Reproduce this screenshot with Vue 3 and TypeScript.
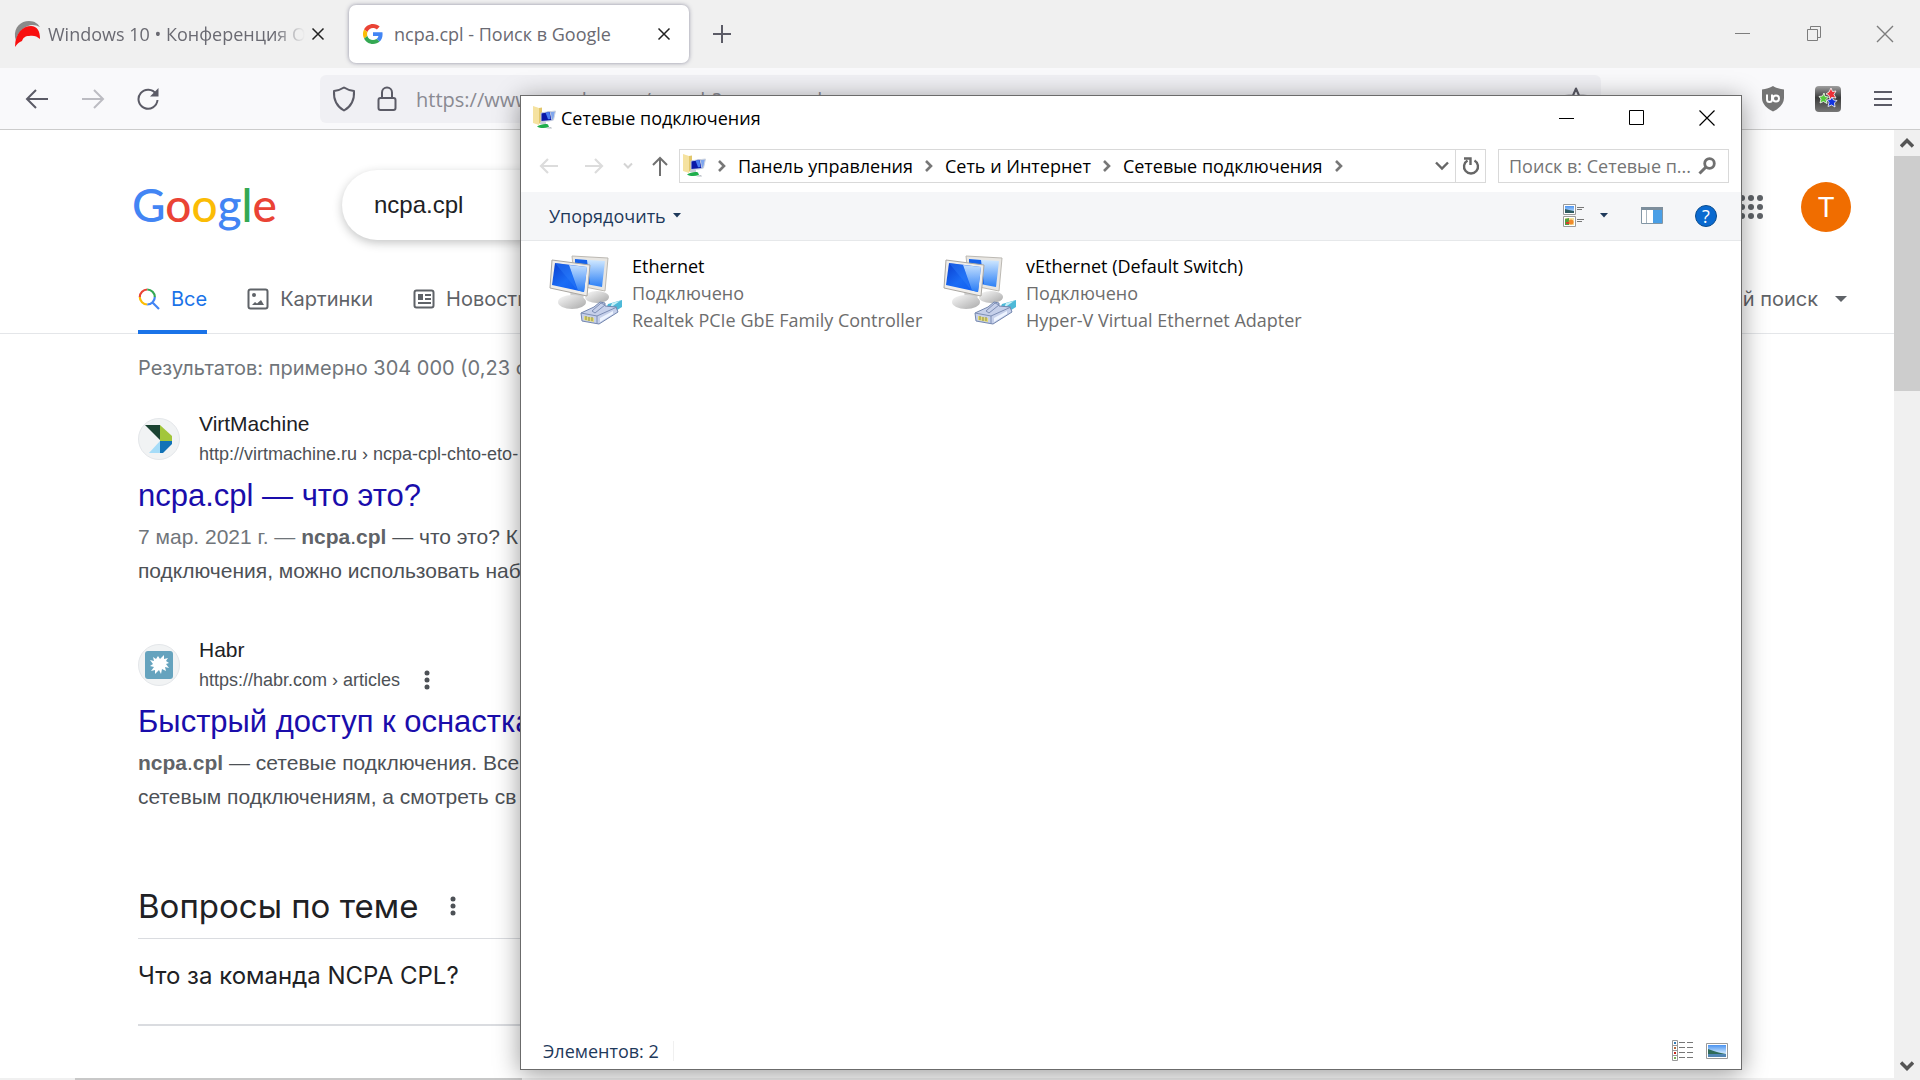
<script setup lang="ts">
import { ref } from 'vue'

interface Adapter {
  name: string
  status: string
  device: string
}

const adapters: Adapter[] = [
  { name: 'Ethernet', status: 'Подключено', device: 'Realtek PCIe GbE Family Controller' },
  { name: 'vEthernet (Default Switch)', status: 'Подключено', device: 'Hyper-V Virtual Ethernet Adapter' },
]

const crumbs: string[] = ['Панель управления', 'Сеть и Интернет', 'Сетевые подключения']

const address = ref('https://www.google.com/search?q=ncpa.cpl')
const query = ref('ncpa.cpl')
</script>

<template>
  <div class="screen">
    <svg class="defs" aria-hidden="true">
      <defs>
        <linearGradient id="glass" x1="0" y1="0" x2="1" y2="1">
          <stop offset="0" stop-color="#0a3fd0" />
          <stop offset="0.5" stop-color="#1a6cf5" />
          <stop offset="1" stop-color="#0b58ee" />
        </linearGradient>
        <linearGradient id="shine" x1="0" y1="0" x2="0" y2="1">
          <stop offset="0" stop-color="#d5ebff" />
          <stop offset="1" stop-color="#2c80f6" />
        </linearGradient>
        <linearGradient id="stand" x1="0" y1="0" x2="1" y2="1">
          <stop offset="0" stop-color="#fafafa" />
          <stop offset="1" stop-color="#a9a9a9" />
        </linearGradient>
        <linearGradient id="sky" x1="0" y1="0" x2="0" y2="1">
          <stop offset="0" stop-color="#4b93f0" />
          <stop offset="1" stop-color="#d9efff" />
        </linearGradient>
        <linearGradient id="plate" x1="0" y1="0" x2="0" y2="1">
          <stop offset="0" stop-color="#a0a0a0" />
          <stop offset="0.45" stop-color="#3a3a3a" />
          <stop offset="1" stop-color="#777" />
        </linearGradient>
        <symbol id="folder-net" viewBox="0 0 24 24">
          <path d="M1 0l6 2v17l-6-2z" fill="#f5e2a0" />
          <path d="M7 2l3-.5v14L7 18z" fill="#e2c76c" />
          <path d="M15 6l8.500-1-2 9-6 1z" fill="#7fa6ee" stroke="#cfd4de" />
          <path d="M9 7l9-1.500L20 14.500l-11 1z" fill="#0a18a8" stroke="#c3cbe0" />
          <path d="M13.500 6.500l4-.6 1 7-2.500.3z" fill="#4a7cf0" />
          <path d="M8 16h6v2H8z" fill="#c9ced6" />
          <path d="M5 20.500c3-2 8-3 11-2l1 2.500c-4 1.500-9 1.400-12-.5z" fill="#1fae4c" />
          <path d="M14 22l5-1 1 1.500h-4z" fill="#b8bdc4" />
        </symbol>
      </defs>
    </svg>

    <header class="tabstrip">
      <div class="tab">
        <svg width="28" height="26" viewBox="0 0 28 26" aria-hidden="true">
          <path d="M1 16C0 6 7 0 15 0c6 0 9 3 11 6-4-2-8-3-12-1C8 7 3 13 2 20z" fill="#8a8a8a" />
          <path d="M1 26C1 12 9 5 17 5c6 0 9 5 9 13-3-3-7-4-11-3-4 0-6 2-7 5-3 1-5 3-7 6z" fill="#f80f0f" />
        </svg>
        <span class="tab-title fading">Windows 10 • Конференция Overclockers</span>
        <button class="plain" aria-label="Закрыть вкладку">
          <svg width="14" height="14" viewBox="0 0 14 14"><path d="M1.500 1.500l11 11m0-11l-11 11" stroke="#222" stroke-width="1.500" /></svg>
        </button>
      </div>
      <div class="tab active">
        <svg width="20" height="20" viewBox="0 0 48 48" aria-hidden="true">
          <path fill="#EA4335" d="M24 9.500c3.540 0 6.710 1.220 9.210 3.600l6.850-6.850C35.900 2.380 30.470 0 24 0 14.620 0 6.510 5.380 2.560 13.220l7.980 6.190C12.430 13.720 17.740 9.500 24 9.500z" />
          <path fill="#4285F4" d="M46.980 24.550c0-1.570-.15-3.090-.38-4.550H24v9.020h12.940c-.58 2.960-2.260 5.480-4.780 7.180l7.730 6c4.510-4.180 7.090-10.360 7.090-17.650z" />
          <path fill="#FBBC05" d="M10.530 28.590A14.500 14.500 0 0 1 10.530 19.410l-7.980-6.190a24 24 0 0 0 0 21.560z" />
          <path fill="#34A853" d="M24 48c6.480 0 11.930-2.130 15.890-5.810l-7.730-6c-2.150 1.450-4.920 2.300-8.160 2.300-6.260 0-11.570-4.220-13.470-9.910l-7.980 6.190C6.510 42.620 14.620 48 24 48z" />
        </svg>
        <span class="tab-title">ncpa.cpl - Поиск в Google</span>
        <button class="plain" aria-label="Закрыть вкладку">
          <svg width="14" height="14" viewBox="0 0 14 14"><path d="M1.500 1.500l11 11m0-11l-11 11" stroke="#222" stroke-width="1.500" /></svg>
        </button>
      </div>
      <button class="plain new-tab" aria-label="Новая вкладка">
        <svg width="20" height="20" viewBox="0 0 20 20"><path d="M10 1v18M1 10h18" stroke="#5b5b66" stroke-width="2" /></svg>
      </button>
      <div class="captions">
        <button class="plain" aria-label="Свернуть">
          <svg width="18" height="18" viewBox="0 0 18 18"><path d="M1 8.500h15" stroke="#7d7d7d" /></svg>
        </button>
        <button class="plain" aria-label="Восстановить">
          <svg width="18" height="18" viewBox="0 0 18 18"><path d="M2.500 4.500h10v11h-10zM5.500 4V1.500h10v11H13" fill="none" stroke="#7d7d7d" /></svg>
        </button>
        <button class="plain" aria-label="Закрыть">
          <svg width="18" height="18" viewBox="0 0 18 18"><path d="M1 1l16 16m0-16L1 17" stroke="#7d7d7d" stroke-width="1.400" /></svg>
        </button>
      </div>
    </header>

    <div class="navbar">
      <div class="nav-buttons">
        <button class="plain" aria-label="Назад">
          <svg width="24" height="24" viewBox="0 0 24 24"><path d="M23 12H2m9-9l-9 9 9 9" fill="none" stroke="#5b5b66" stroke-width="2" /></svg>
        </button>
        <button class="plain" aria-label="Вперёд" disabled>
          <svg width="24" height="24" viewBox="0 0 24 24"><path d="M1 12h21m-9-9l9 9-9 9" fill="none" stroke="#bcbcc2" stroke-width="2" /></svg>
        </button>
        <button class="plain" aria-label="Обновить">
          <svg width="24" height="24" viewBox="0 0 24 24"><path d="M19 7a9.500 9.500 0 1 0 1.500 6" fill="none" stroke="#5b5b66" stroke-width="2" /><path d="M21.500 1v8.500H13z" fill="#5b5b66" /></svg>
        </button>
      </div>
      <div class="urlbar">
        <svg width="24" height="26" viewBox="0 0 24 26" aria-hidden="true"><path d="M12 1.500c3 2 6 3 10 3.500.5 8-2 15-10 19.500C4 20 1.500 13 2 5c4-.5 7-1.500 10-3.500z" fill="none" stroke="#5b5b66" stroke-width="2" stroke-linejoin="round" /></svg>
        <svg width="20" height="26" viewBox="0 0 20 26" aria-hidden="true"><rect x="1.500" y="12" width="17" height="12" rx="2" fill="none" stroke="#5b5b66" stroke-width="2" /><path d="M5 12V6.500a5 5 0 0 1 10 0V12" fill="none" stroke="#5b5b66" stroke-width="2" /></svg>
        <input v-model="address" class="url" type="text" aria-label="Адрес" />
        <button class="plain" aria-label="Добавить в закладки">
          <svg width="24" height="24" viewBox="0 0 24 24"><path d="M12 1.500l3 7 8 .6-6 5 2 8-7-4.400-7 4.400 2-8-6-5 8-.6z" fill="none" stroke="#5b5b66" stroke-width="2" stroke-linejoin="round" /></svg>
        </button>
      </div>
      <div class="extensions">
        <button class="plain" aria-label="uBlock Origin">
          <svg width="26" height="26" viewBox="0 0 26 26"><path d="M13 0c3 2 7 3 11 3.500V12c0 6-5 10.500-11 13.500C7 22.500 2 18 2 12V3.500C6 3 10 2 13 0z" fill="#757575" /><path d="M7 8.500v5a2.500 2.500 0 0 0 5 0v-5m0 5" fill="none" stroke="#fff" stroke-width="2" /><circle cx="16" cy="12.500" r="3" fill="none" stroke="#fff" stroke-width="2" /></svg>
        </button>
        <button class="plain" aria-label="Расширение">
          <svg width="26" height="26" viewBox="0 0 26 26"><rect width="26" height="26" rx="4" fill="url(#plate)" /><g stroke="#fff" stroke-width="0.800"><path d="M16 2l1.500 3.500 3.500-.5-2 3.500 2 3.500-4-.5-2 2-1-4-3-1.500 3-2z" fill="#ee3038" /><path d="M9 7l1 3.500 3.500.5-2.500 2.500 1 4-3.500-2-3.500 1.500 1-4-2-2.500 3.500-.5z" fill="#55c83a" /><path d="M17 11l1.500 3 3.500.5-2.500 2.500.5 4-3.500-2-3.500 1.500 1-4-2-2.500 3.500-.5z" fill="#1133e0" /></g></svg>
        </button>
        <button class="plain" aria-label="Меню">
          <svg width="26" height="26" viewBox="0 0 26 26"><path d="M4 6h18M4 13h18M4 19h18" stroke="#5b5b66" stroke-width="2" /></svg>
        </button>
      </div>
    </div>

    <div class="viewport">
      <main class="page">
        <div class="searchrow">
          <a class="logo" href="#" aria-label="Google"><span class="blue">G</span><span class="red">o</span><span class="yellow">o</span><span class="blue">g</span><span class="green">l</span><span class="red">e</span></a>
          <input v-model="query" class="query" type="text" aria-label="Поиск" />
          <div class="account">
            <button class="plain" aria-label="Приложения">
              <svg width="26" height="26" viewBox="0 0 26 26" fill="#5f6368"><circle cx="4" cy="4" r="3" /><circle cx="13" cy="4" r="3" /><circle cx="22" cy="4" r="3" /><circle cx="4" cy="13" r="3" /><circle cx="13" cy="13" r="3" /><circle cx="22" cy="13" r="3" /><circle cx="4" cy="22" r="3" /><circle cx="13" cy="22" r="3" /><circle cx="22" cy="22" r="3" /></svg>
            </button>
            <button class="plain avatar">T</button>
          </div>
        </div>

        <nav class="modes">
          <a class="mode current" href="#">
            <svg width="22" height="22" viewBox="0 0 22 22" fill="none" stroke-width="2.200" aria-hidden="true"><path d="M1.800 9a7.500 7.500 0 0 1 7.500-7.500" stroke="#ea4335" /><path d="M9.300 1.500a7.500 7.500 0 0 1 7.500 7.500" stroke="#34a853" /><path d="M1.800 9a7.500 7.500 0 0 0 7.500 7.500" stroke="#fbbc04" /><path d="M9.300 16.500a7.500 7.500 0 0 0 7.500-7.500M14.500 14.500l6.500 6.500" stroke="#4285f4" /></svg>
            Все
          </a>
          <a class="mode" href="#">
            <svg width="22" height="22" viewBox="0 0 22 22" aria-hidden="true"><rect x="1.500" y="1.500" width="19" height="19" rx="2" fill="none" stroke="#5f6368" stroke-width="2" /><circle cx="7" cy="7" r="2" fill="#5f6368" /><path d="M5 17l3-3 2 1.500 4-3.500 3 5z" fill="#5f6368" /></svg>
            Картинки
          </a>
          <a class="mode" href="#">
            <svg width="22" height="22" viewBox="0 0 22 22" aria-hidden="true"><rect x="1.500" y="2.500" width="19" height="17" rx="2" fill="none" stroke="#5f6368" stroke-width="2" /><path d="M5 6h5v6H5zM12 6h6v2h-6zM12 10h6v2h-6zM5 14h13v2H5z" fill="#5f6368" /></svg>
            Новости
          </a>
          <button class="plain safe">
            Безопасный поиск
            <svg width="14" height="8" viewBox="0 0 14 8" aria-hidden="true"><path d="M1 1h12L7 7z" fill="#5f6368" /></svg>
          </button>
        </nav>

        <div class="column">
          <p class="count">Результатов: примерно 304 000 (0,23 сек.)</p>

          <article class="result">
            <div class="source">
              <span class="favicon">
                <svg width="28" height="28" viewBox="0 0 28 28" aria-hidden="true"><path d="M0 0h15v15z" fill="#1b4332" /><path d="M15 0l12 11v5H15z" fill="#a2c63b" /><path d="M15 16h12v3l-9 9h-3z" fill="#1172b6" /><path d="M15 16v12H4z" fill="#a5dcf8" /></svg>
              </span>
              <div>
                <div class="site">VirtMachine</div>
                <div class="path">http://virtmachine.ru › ncpa-cpl-chto-eto-</div>
              </div>
            </div>
            <h3><a href="#">ncpa.cpl — что это?</a></h3>
            <p class="snippet"><span class="date">7 мар. 2021 г. — </span><b>ncpa</b>.<b>cpl</b> — что это? К<br />подключения, можно использовать наб</p>
          </article>

          <article class="result">
            <div class="source">
              <span class="favicon">
                <svg width="28" height="28" viewBox="0 0 28 28" aria-hidden="true"><rect width="28" height="28" rx="3" fill="#65a3be" /><path d="M8 6l3 2 2-3 2 3 4-4v4l4-1-2 3 3 2-3 1 3 4-4-1 1 4-4-2-1 5-2-4-4 4v-4l-4 1 3-4-4-1 3-2-3-4 4 1z" fill="#fff" /></svg>
              </span>
              <div>
                <div class="site">Habr</div>
                <div class="path">
                  https://habr.com › articles
                  <button class="plain dots" aria-label="Подробнее"><svg width="6" height="20" viewBox="0 0 6 20" fill="#4d5156"><circle cx="3" cy="3" r="2.500" /><circle cx="3" cy="10" r="2.500" /><circle cx="3" cy="17" r="2.500" /></svg></button>
                </div>
              </div>
            </div>
            <h3><a href="#">Быстрый доступ к оснасткам</a></h3>
            <p class="snippet"><b>ncpa</b>.<b>cpl</b> — сетевые подключения. Все<br />сетевым подключениям, а смотреть св</p>
          </article>

          <section class="related">
            <h2>
              Вопросы по теме
              <button class="plain dots" aria-label="Подробнее"><svg width="6" height="20" viewBox="0 0 6 20" fill="#4d5156"><circle cx="3" cy="3" r="2.500" /><circle cx="3" cy="10" r="2.500" /><circle cx="3" cy="17" r="2.500" /></svg></button>
            </h2>
            <button class="plain question">Что за команда NCPA CPL?</button>
          </section>
        </div>
      </main>

      <div class="scrollbar" aria-hidden="true">
        <div class="arrow"><svg width="14" height="10" viewBox="0 0 14 10"><path d="M1 8.500l6-6 6 6" fill="none" stroke="#555" stroke-width="3.500" /></svg></div>
        <div class="thumb"></div>
        <div class="arrow end"><svg width="14" height="10" viewBox="0 0 14 10"><path d="M1 1.500l6 6 6-6" fill="none" stroke="#555" stroke-width="3.500" /></svg></div>
      </div>
    </div>
    <div class="hscroll" aria-hidden="true"><div class="hthumb"></div></div>

    <section class="window">
      <header class="titlebar">
        <svg width="24" height="24" aria-hidden="true"><use href="#folder-net" /></svg>
        <span>Сетевые подключения</span>
        <div class="win-captions">
          <button class="plain" aria-label="Свернуть"><svg width="16" height="16" viewBox="0 0 16 16"><path d="M0 8.500h15" stroke="#000" /></svg></button>
          <button class="plain" aria-label="Развернуть"><svg width="16" height="16" viewBox="0 0 16 16"><path d="M.5.500h14v14H.5z" fill="none" stroke="#000" /></svg></button>
          <button class="plain" aria-label="Закрыть"><svg width="16" height="16" viewBox="0 0 16 16"><path d="M.5.500l15 15m0-15l-15 15" stroke="#000" stroke-width="1.200" /></svg></button>
        </div>
      </header>

      <div class="addressrow">
        <div class="history">
          <button class="plain back" aria-label="Назад" disabled><svg width="20" height="18" viewBox="0 0 20 18"><path d="M19 9H2m7-7L2 9l7 7" fill="none" stroke="#dcdcdc" stroke-width="2.200" /></svg></button>
          <button class="plain" aria-label="Вперёд" disabled><svg width="20" height="18" viewBox="0 0 20 18"><path d="M1 9h17m-7-7l7 7-7 7" fill="none" stroke="#dcdcdc" stroke-width="2.200" /></svg></button>
          <button class="plain" aria-label="Журнал" disabled><svg width="10" height="8" viewBox="0 0 10 8"><path d="M1 1.500l4 4 4-4" fill="none" stroke="#d4d4d4" stroke-width="2" /></svg></button>
          <button class="plain" aria-label="Вверх"><svg width="16" height="20" viewBox="0 0 16 20"><path d="M8 20V2M1 9l7-7 7 7" fill="none" stroke="#707070" stroke-width="2" /></svg></button>
        </div>
        <div class="crumbs">
          <svg width="24" height="24" aria-hidden="true"><use href="#folder-net" /></svg>
          <svg class="sep" width="8" height="12" viewBox="0 0 8 12" aria-hidden="true"><path d="M1 1l5 5-5 5" fill="none" stroke="#777" stroke-width="2.600" /></svg>
          <template v-for="crumb in crumbs" :key="crumb">
            <a href="#">{{ crumb }}</a>
            <svg class="sep" width="8" height="12" viewBox="0 0 8 12" aria-hidden="true"><path d="M1 1l5 5-5 5" fill="none" stroke="#777" stroke-width="2.600" /></svg>
          </template>
          <button class="plain drop" aria-label="Предыдущие расположения"><svg width="14" height="10" viewBox="0 0 14 10"><path d="M1 1.500l6 6 6-6" fill="none" stroke="#666" stroke-width="2.400" /></svg></button>
          <button class="plain refresh" aria-label="Обновить"><svg width="18" height="20" viewBox="0 0 18 20"><path d="M12.500 4.500a7 7 0 1 1-7 0" fill="none" stroke="#666" stroke-width="2.400" /><path d="M2 2.500h6.500v6.500" fill="none" stroke="#666" stroke-width="2.400" /></svg></button>
        </div>
        <div class="find">
          <input type="text" placeholder="Поиск в: Сетевые п..." aria-label="Поиск в: Сетевые подключения" />
          <svg width="18" height="18" viewBox="0 0 18 18" aria-hidden="true"><circle cx="11.500" cy="6.500" r="4.800" fill="none" stroke="#707070" stroke-width="2.800" /><path d="M8 10L1.500 16.500" stroke="#707070" stroke-width="3" /></svg>
        </div>
      </div>

      <div class="commands">
        <button class="plain organize">Упорядочить <svg width="8" height="5" viewBox="0 0 8 5" aria-hidden="true"><path d="M0 0h8L4 4.500z" fill="#1e395b" /></svg></button>
        <div class="views">
          <button class="plain" aria-label="Изменить представление">
            <svg width="22" height="24" viewBox="0 0 22 24"><g fill="#fff" stroke="#9a9a9a"><path d="M.5.500h12v10H.5zM.5 12.500h12v10H.5z" /></g><path d="M2 2h9v7H2z" fill="url(#sky)" /><path d="M2 5l4 1 5 1v2H2z" fill="#2d5a60" /><path d="M2 14h9v7H2z" fill="#f4df9a" /><path d="M2 15l4-1v7H2z" fill="#4f9e3f" /><circle cx="8" cy="18" r="2.500" fill="#f08a2c" /><path d="M3 18h3v2H3z" fill="#d6402e" /><path d="M14 3.500h7M14 5.500h5M14 15.500h7M14 17.500h5" stroke="#777" /></svg>
          </button>
          <button class="plain" aria-label="Дополнительные параметры"><svg width="8" height="5" viewBox="0 0 8 5"><path d="M0 0h8L4 4.500z" fill="#1e395b" /></svg></button>
          <button class="plain pane" aria-label="Область просмотра"><svg width="22" height="18" viewBox="0 0 22 18"><path d="M.5 1.500h21v15H.5z" fill="#fff" stroke="#8296a5" /><path d="M0 0h22v3H0z" fill="#7d8e9c" /><path d="M5.500 3v13" stroke="#a9b6c0" /><path d="M12 3h9v13h-9z" fill="#4a9fe6" /></svg></button>
          <button class="plain help" aria-label="Справка">?</button>
        </div>
      </div>

      <ul class="adapters">
        <li v-for="item in adapters" :key="item.name">
          <svg width="76" height="74" viewBox="0 0 76 74" aria-hidden="true">
            <ellipse cx="49" cy="44" rx="12" ry="6" fill="url(#stand)" />
            <path d="M24 3l36 2-3 33-30-6z" fill="#e8e6e2" stroke="#bcb9b3" />
            <path d="M27 6l30 2-3 26-27-5z" fill="url(#shine)" />
            <path d="M27 6l12 1 3 24-15-2z" fill="#1461ea" />
            <path d="M22 37l14 3-1 8H23z" fill="#cfcfcf" />
            <ellipse cx="24" cy="49" rx="14" ry="7" fill="url(#stand)" />
            <path d="M4 7l38 5-3 31L2 35z" fill="#efedea" stroke="#aaa7a2" />
            <path d="M7 10l32 4-3 25L4 32z" fill="url(#glass)" />
            <path d="M21 12l18 2-3 25-6-1.500z" fill="url(#shine)" opacity="0.900" />
            <path d="M7 10l14 2 8 25z" fill="#2d7cf8" opacity="0.450" />
            <path d="M60 51l14-4v7l-8 5-9-1z" fill="#4db9d8" />
            <path d="M64 50l8-2-10 7z" fill="#c5f0f7" />
            <path d="M33 60l13-6 6-5 5 1v3l11 1 2 5-19 12-17-3z" fill="#c6d0ea" stroke="#7386ae" stroke-linejoin="round" />
            <path d="M33 60l16 3 20-9M49 63v8M44 58l9-8 4 2-10 8z" fill="none" stroke="#7d8eb5" />
            <path d="M36 63l10 2v4l-10-2z" fill="#e4dc78" />
            <path d="M38 63v4M41 64v4M44 64v4" stroke="#8d8b48" />
            <path d="M52 65l13-7v3l-13 8z" fill="#eef4ff" />
          </svg>
          <div class="info">
            <div class="name">{{ item.name }}</div>
            <div>{{ item.status }}</div>
            <div>{{ item.device }}</div>
          </div>
        </li>
      </ul>

      <footer class="status">
        <span class="items">Элементов: 2</span>
        <div class="modes-switch">
          <button class="plain" aria-label="Таблица"><svg width="22" height="22" viewBox="0 0 22 22"><path d="M.5.500h5v20h-5zM.5 5.500h5M.5 10.500h5M.5 15.500h5" fill="#fff" stroke="#999" /><path d="M2 2h2v2H2z" fill="#357bb5" /><path d="M2 7h2v2H2z" fill="#b66a3e" /><path d="M2 12h2v2H2z" fill="#c6291f" /><path d="M2 17h2v2H2z" fill="#77b255" /><path d="M7 2.500h6m2 0h6M7 7.500h6m2 0h6M7 12.500h6m2 0h6M7 17.500h6m2 0h6" stroke="#777" /></svg></button>
          <button class="plain" aria-label="Крупные значки"><svg width="22" height="16" viewBox="0 0 22 16"><path d="M.5.500h21v15H.5z" fill="#fff" stroke="#999" /><path d="M2 2h18v9H2z" fill="url(#sky)" /><path d="M2 6c4 1 7 3 13 4l5 1H2z" fill="#2f6b5a" /><path d="M2 11h18v3H2z" fill="#5286b4" /></svg></button>
        </div>
      </footer>
    </section>
  </div>
</template>

<style>
body {
  background: #fff;
}
</style>

<style scoped>
* {
  box-sizing: border-box;
}
.screen {
  position: relative;
  display: flex;
  flex-direction: column;
  min-height: 100vh;
  overflow: hidden;
  font-family: "Open Sans", "Noto Sans", sans-serif;
  font-size: 18px;
}
.defs {
  position: absolute;
  width: 0;
  height: 0;
}
.plain {
  display: flex;
  align-items: center;
  padding: 0;
  border: 0;
  background: none;
  font: inherit;
  color: inherit;
}
svg {
  flex: none;
}
a {
  color: inherit;
  text-decoration: none;
}
p,
h2,
h3,
ul {
  margin: 0;
  padding: 0;
  font-weight: 400;
}
input {
  min-width: 0;
  padding: 0;
  border: 0;
  outline: 0;
  background: none;
  font: inherit;
}

/* browser tabs */
.tabstrip {
  display: flex;
  align-items: center;
  height: 68px;
  background: #f0f0f0;
}
.tab {
  display: flex;
  align-items: center;
  width: 340px;
  height: 58px;
  padding: 0 18px 0 14px;
  gap: 6px;
  color: #6a6a72;
  white-space: nowrap;
}
.tab-title {
  flex: 1;
  overflow: hidden;
}
.fading {
  -webkit-mask-image: linear-gradient(to right, #000 88%, transparent 100%);
  mask-image: linear-gradient(to right, #000 88%, transparent 100%);
}
.tab:first-child {
  margin-right: 9px;
  padding-right: 15px;
}
.tab.active {
  gap: 11px;
  border-radius: 7px;
  background: #fff;
  box-shadow: 0 0 4px rgba(80, 80, 110, 0.6);
}
.new-tab {
  margin-left: 23px;
}
.captions {
  display: flex;
  gap: 53px;
  margin-left: auto;
  padding-right: 26px;
}

/* browser toolbar */
.navbar {
  display: flex;
  align-items: center;
  height: 62px;
  border-bottom: 1px solid #ccc;
  background: #f9f9fb;
}
.nav-buttons {
  display: flex;
  gap: 32px;
  width: 320px;
  padding-left: 25px;
}
.urlbar {
  display: flex;
  flex: 1;
  align-items: center;
  height: 48px;
  padding: 0 13px 0 12px;
  border-radius: 6px;
  background: #f0f0f4;
}
.urlbar svg + svg {
  margin-left: 21px;
}
.url {
  flex: 1;
  margin-left: 19px;
  padding-top: 1px;
  color: #8a8a92;
  font-size: 20px;
}
.extensions {
  display: flex;
  gap: 29px;
  padding: 0 24px 0 159px;
}

/* search page */
.viewport {
  display: flex;
  flex: 1;
}
.page {
  flex: 1;
  min-width: 0;
}
.searchrow {
  display: flex;
  align-items: center;
  padding: 40px 43px 0 132px;
}
.logo {
  width: 210px;
  font-family: Lato, sans-serif;
  font-size: 46px;
  font-weight: 500;
  line-height: 60px;
}
.blue {
  color: #4285f4;
}
.red {
  color: #ea4335;
}
.yellow {
  color: #fbbc05;
}
.green {
  color: #34a853;
}
.query {
  flex: 1;
  max-width: 1040px;
  height: 70px;
  padding: 0 32px;
  border-radius: 35px;
  color: #202124;
  font-family: "Liberation Sans", sans-serif;
  font-size: 24px;
  box-shadow: 0 3px 10px rgba(32, 33, 36, 0.26);
}
.account {
  display: flex;
  align-items: center;
  gap: 37px;
  margin-left: auto;
  padding-top: 4px;
}
.avatar {
  justify-content: center;
  width: 50px;
  height: 50px;
  border-radius: 50%;
  background: #f06d00;
  color: #fff;
  font-family: Roboto, sans-serif;
  font-size: 28px;
}
.modes {
  display: flex;
  align-items: flex-end;
  gap: 40px;
  height: 94px;
  padding: 0 46px 0 138px;
  border-bottom: 1px solid #e4e6e9;
  color: #5f6368;
  font-family: Inter, sans-serif;
  font-size: 20px;
}
.mode,
.safe {
  display: flex;
  align-items: center;
  gap: 11px;
  height: 66px;
  margin-bottom: -1px;
  border-bottom: 4px solid transparent;
}
.current {
  border-color: #1a73e8;
  color: #1a73e8;
}
.safe {
  gap: 16px;
  margin-left: auto;
}
.column {
  width: 900px;
  margin-left: 138px;
  color: #4d5156;
  font-family: "Liberation Sans", sans-serif;
  font-size: 21px;
  white-space: nowrap;
}
.count {
  height: 75px;
  color: #70757a;
  font-family: Inter, sans-serif;
  font-size: 20px;
  line-height: 68px;
}
.result {
  margin-bottom: 47px;
}
.source {
  display: flex;
  align-items: center;
  gap: 19px;
  line-height: 30px;
}
.favicon {
  display: flex;
  align-items: center;
  justify-content: center;
  width: 42px;
  height: 42px;
  border: 1px solid #e4e7ea;
  border-radius: 50%;
  background: #f1f3f4;
}
.site {
  color: #202124;
}
.path {
  display: flex;
  align-items: center;
  gap: 24px;
  font-size: 18px;
}
.dots {
  display: inline-flex;
}
h3 {
  height: 51px;
  color: #1a0dab;
  font-size: 31px;
  line-height: 53px;
}
.snippet {
  line-height: 34px;
}
.snippet b {
  color: #5f6368;
}
.date {
  color: #70757a;
}
.related {
  padding-top: 2px;
}
h2 {
  display: flex;
  align-items: center;
  gap: 32px;
  height: 76px;
  padding-top: 10px;
  border-bottom: 1px solid #dadce0;
  color: #202124;
  font-family: Inter, sans-serif;
  font-size: 33px;
}
.question {
  width: 100%;
  height: 87px;
  padding-bottom: 12px;
  border-bottom: 2px solid #dadce0;
  color: #202124;
  font-family: Inter, sans-serif;
  font-size: 24px;
}
.scrollbar {
  display: flex;
  flex-direction: column;
  width: 26px;
  background: #f0f0f0;
}
.arrow {
  display: flex;
  align-items: center;
  justify-content: center;
  height: 26px;
}
.thumb {
  height: 235px;
  background: #cdcdcd;
}
.end {
  height: 24px;
  margin-top: auto;
}
.hscroll {
  height: 2px;
  padding-left: 75px;
  background: #f0f0f0;
}
.hthumb {
  width: 447px;
  height: 2px;
  background: #c8c8c8;
}

/* network connections window */
.window {
  position: absolute;
  inset: 95px 178px 10px 520px;
  display: flex;
  flex-direction: column;
  border: 1px solid #6b6b6b;
  background: #fff;
  color: #000;
  box-shadow: 0 4px 24px rgba(0, 0, 0, 0.4);
}
.titlebar {
  display: flex;
  align-items: center;
  gap: 5px;
  height: 46px;
  padding: 0 26px 2px 11px;
}
.win-captions {
  display: flex;
  gap: 54px;
  margin-left: auto;
}
.addressrow {
  display: flex;
  align-items: center;
  height: 50px;
  padding: 0 12px 2px 18px;
}
.history {
  display: flex;
  align-items: center;
  gap: 19px;
  width: 140px;
}
.back {
  margin-right: 6px;
}
.crumbs {
  display: flex;
  flex: 1;
  align-items: center;
  gap: 12px;
  height: 34px;
  padding-left: 2px;
  border: 1px solid #d9d9d9;
}
.drop {
  margin-left: auto;
}
.refresh {
  justify-content: center;
  width: 30px;
  height: 32px;
  margin-left: -6px;
  border-left: 1px solid #d9d9d9;
}
.find {
  display: flex;
  align-items: center;
  gap: 4px;
  width: 231px;
  height: 34px;
  margin-left: 12px;
  padding: 0 12px 0 10px;
  border: 1px solid #d9d9d9;
}
.find input {
  flex: 1;
}
.find input::placeholder {
  color: #757575;
  opacity: 1;
}
.commands {
  display: flex;
  align-items: center;
  justify-content: space-between;
  height: 49px;
  padding: 0 24px 1px 28px;
  border-bottom: 1px solid #e6e8ea;
  background: #f5f6f8;
  color: #1e395b;
}
.organize {
  gap: 7px;
}
.views {
  display: flex;
  align-items: center;
  gap: 15px;
}
.pane {
  margin-left: 18px;
}
.help {
  justify-content: center;
  width: 22px;
  height: 22px;
  margin-left: 17px;
  border: 1px solid #0a4c8e;
  border-radius: 50%;
  background: #0a6ad0;
  color: #fff;
  font-size: 18px;
  line-height: 20px;
}
.adapters {
  display: flex;
  flex: 1;
  align-items: flex-start;
  padding: 12px 0 0 27px;
  list-style: none;
}
.adapters li {
  display: flex;
  gap: 8px;
  width: 394px;
}
.info {
  color: #6d6d6d;
  line-height: 27px;
  white-space: nowrap;
}
.name {
  color: #000;
}
.status {
  display: flex;
  align-items: center;
  height: 36px;
  padding: 0 13px 0 22px;
  color: #1e395b;
}
.items {
  padding-right: 14px;
  border-right: 1px solid #f0f0f0;
  line-height: 20px;
}
.modes-switch {
  display: flex;
  gap: 12px;
  margin-left: auto;
}
</style>
